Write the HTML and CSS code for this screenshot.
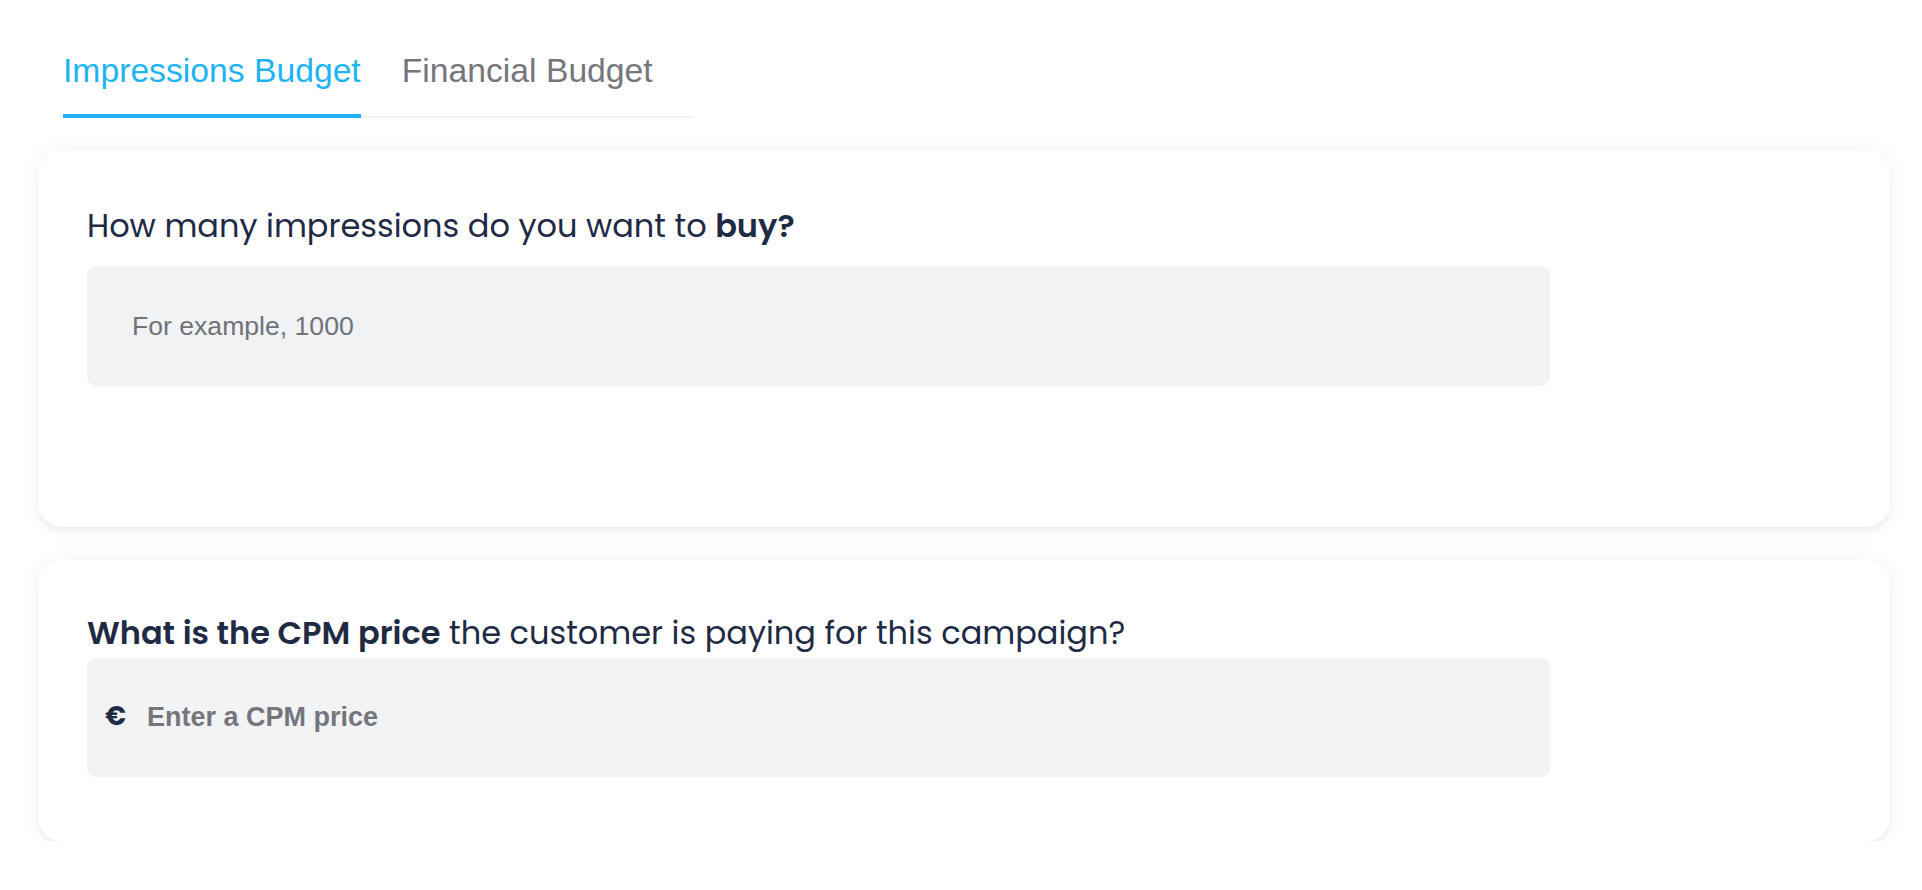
FILE: index.html
```html
<!DOCTYPE html>
<html lang="en">
<head>
<meta charset="utf-8">
<title>Budget</title>
<link rel="stylesheet" href="styles.css">
</head>
<body>
<main class="page">
  <nav class="tabs">
    <button class="tab tab--active" type="button">Impressions Budget</button>
    <button class="tab" type="button">Financial Budget</button>
  </nav>

  <section class="card card--impressions">
    <label class="question" for="impressions">How many impressions do you want to <strong>buy?</strong></label>
    <input id="impressions" class="field" type="text" placeholder="For example, 1000">
  </section>

  <section class="card card--cpm">
    <label class="question" for="cpm"><strong>What is the CPM price</strong> the customer is paying for this campaign?</label>
    <div class="field field--prefixed">
      <span class="prefix">€</span>
      <input id="cpm" class="field__input" type="text" placeholder="Enter a CPM price">
    </div>
  </section>
</main>
</body>
</html>
```

FILE: styles.css
```css
html, body {
  margin: 0;
  padding: 0;
  background: #ffffff;
}

body {
  font-family: "Liberation Sans", Arial, sans-serif;
  color: #1f2a44;
}

.page {
  padding: 51px 32px 0 38px;
}

.tabs {
  display: flex;
  width: fit-content;
  margin-left: 25px;
  border-bottom: 2px solid #f0f1f3;
}

.tab {
  font-family: "Liberation Sans", Arial, sans-serif;
  font-size: 33.7px;
  line-height: 39px;
  color: #75767c;
  background: none;
  border: none;
  border-bottom: 4px solid transparent;
  margin: 0 41px -2px 0;
  padding: 0 0 24px;
  cursor: pointer;
}

.tab--active {
  color: #1fb3f4;
  border-bottom-color: #1fb3f4;
}

.card {
  background: #ffffff;
  border-radius: 24px;
  box-shadow: 0 4px 4px rgba(20, 30, 50, 0.05), 0 0 20px rgba(20, 30, 50, 0.05);
  padding: 0 48px 0 49px;
  margin-top: 32px;
}

.card--impressions {
  padding-top: 53px;
  padding-bottom: 141px;
}

.card--cpm {
  margin-top: 33px;
  padding-top: 50px;
  padding-bottom: 64px;
}

.question {
  display: block;
  font-family: "Poppins", "Inter", sans-serif;
  font-size: 32px;
  line-height: 46px;
  font-weight: 400;
  color: #1f2a44;
}

.question strong {
  font-weight: 600;
}

.card--impressions .question {
  margin-bottom: 17px;
}

.card--cpm .question {
  margin-bottom: 2px;
}

.field {
  box-sizing: border-box;
  display: block;
  width: 1463px;
  height: 120px;
  border: none;
  outline: none;
  border-radius: 9px;
  background: #f1f2f4;
  padding: 0 0 0 45px;
  font-family: "Liberation Sans", Arial, sans-serif;
  font-size: 26.6px;
  color: #1f2a44;
}

.field::placeholder {
  color: #707279;
}

.field--prefixed {
  display: flex;
  align-items: stretch;
  padding: 0;
  height: 119px;
  overflow: hidden;
}

.prefix {
  box-sizing: border-box;
  width: 40px;
  display: flex;
  align-items: center;
  justify-content: flex-end;
  font-family: "Poppins", "Liberation Sans", Arial, sans-serif;
  font-weight: 700;
  font-size: 26px;
  color: #1f2a44;
  padding: 0 1px 2px 0;
}

.field__input {
  flex: 1;
  border: none;
  outline: none;
  background: #f2f3f5;
  box-shadow: -1px 0 2px rgba(0, 0, 0, 0.015);
  padding: 0 0 0 20px;
  font-family: "Liberation Sans", Arial, sans-serif;
  font-weight: 700;
  font-size: 27px;
  color: #1f2a44;
}

.field__input::placeholder {
  color: #74767c;
}
```
